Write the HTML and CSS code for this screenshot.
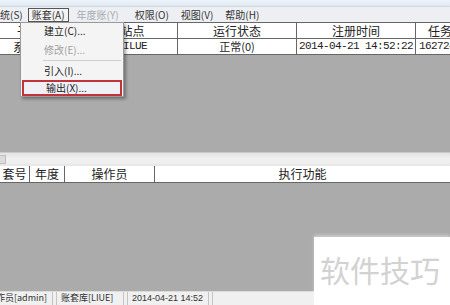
FILE: index.html
```html
<!DOCTYPE html>
<html>
<head>
<meta charset="utf-8">
<link rel="stylesheet" href="styles.css">
</head>
<body>
<div class="app">
  <div class="titlebar"></div>
  <div class="menubar">
    <span class="mi first">系统(S)</span>
    <span class="mi active">账套(A)</span>
    <span class="mi disabled">年度账(Y)</span>
    <span class="mi">权限(O)</span>
    <span class="mi">视图(V)</span>
    <span class="mi">帮助(H)</span>
  </div>
  <div class="grid top-grid">
    <div class="row head">
      <div class="c w1 left hp">子系统</div>
      <div class="c w2">站点</div>
      <div class="c w3">运行状态</div>
      <div class="c w4">注册时间</div>
      <div class="c w5">任务号</div>
    </div>
    <div class="row">
      <div class="c w1 left dp">系统管理</div>
      <div class="c w2 left mono sp">LILUE</div>
      <div class="c w3 mixed">正常(0)</div>
      <div class="c w4 mono">2014-04-21 14:52:22</div>
      <div class="c w5 left mono tp">1627244</div>
    </div>
  </div>
  <div class="gray upper"></div>
  <div class="hscroll"><span class="sbtn"></span></div>
  <div class="grid log-grid">
    <div class="row head">
      <div class="c l1">套号</div>
      <div class="c l2">年度</div>
      <div class="c l3">操作员</div>
      <div class="c l4">执行功能</div>
    </div>
  </div>
  <div class="gray lower"></div>
  <div class="status">
    <span class="pane p1">操作员[admin]</span>
    <span class="pane p2">账套库[LIUE]</span>
    <span class="pane p3">2014-04-21 14:52</span>
    <span class="pane p4"></span>
  </div>

  <div class="dropdown">
    <div class="item">建立(C)...</div>
    <div class="item disabled second">修改(E)...</div>
    <div class="sep"></div>
    <div class="item">引入(I)...</div>
    <div class="item selected">输出(X)...</div>
  </div>

  <div class="watermark">软件技巧</div>
</div>
</body>
</html>
```

FILE: styles.css
```css
* { box-sizing: border-box; }
html, body { margin: 0; padding: 0; }
body {
  width: 450px;
  height: 305px;
  overflow: hidden;
  font-family: "Noto Sans CJK SC", "Liberation Sans", sans-serif;
  color: #222;
}
.app {
  position: relative;
  width: 450px;
  height: 305px;
  display: flex;
  flex-direction: column;
  background: #ababab;
  overflow: hidden;
}
.titlebar {
  height: 7px;
  background: linear-gradient(#eef3f9, #dfe8f2);
  border-bottom: 1px solid #cfd8e3;
}
.menubar {
  height: 15px;
  background: #edeff2;
  display: flex;
  align-items: center;
  font-size: 10px;
  line-height: 12px;
  white-space: nowrap;
}
.mi {
  padding: 0 3px;
  margin-right: 4px;
  color: #333;
  border: 1px solid transparent;
}
.mi.first { margin-left: -14px; margin-right: 1px; }
.mi.active {
  border: 1px solid #555;
  background: #f4f4f4;
}
.mi.disabled { color: #a7abb3; margin-right: 8px; }

.grid { background: #fff; }
.top-grid {
  border-top: 1px solid #666;
}
.row {
  display: flex;
  height: 16px;
  border-bottom: 1px solid #666;
  white-space: nowrap;
}
.c {
  height: 15px;
  border-right: 1px solid #666;
  text-align: center;
  font-size: 12px;
  line-height: 15px;
  overflow: hidden;
  flex: none;
}
.left { text-align: left; }
.hp { padding-left: 17px; }
.dp { padding-left: 13px; }
.sp { padding-left: 29px; }
.tp { padding-left: 3px; }
.mono {
  font-family: "Liberation Mono", monospace;
  font-size: 11px;
  letter-spacing: -0.6px;
}
.mixed { font-size: 11px; }
.w1 { width: 88px; }
.w2 { width: 90px; }
.w3 { width: 119px; }
.w4 { width: 119px; }
.w5 { width: 60px; border-right: none; }

.upper { height: 97px; }
.hscroll {
  height: 14px;
  background: linear-gradient(#e3e3e3, #f0f0f0 40%, #f0f0f0 70%, #e6e6e6);
  border-top: 1px solid #c9c9c9;
  display: flex;
  align-items: center;
}
.sbtn {
  width: 6px;
  height: 9px;
  background: #dcdcdc;
  border: 1px solid #bdbdbd;
  border-left: none;
}
.log-grid .row { height: 17px; }
.log-grid .c { height: 16px; line-height: 16px; }
.l1 { width: 30px; }
.l2 { width: 35px; }
.l3 { width: 90px; }
.l4 { width: 295px; border-right: none; }

.lower { flex: 1; }
.status {
  height: 14px;
  background: #f0f0f0;
  border-top: 1px solid #dcdcdc;
  display: flex;
  gap: 3px;
  font-size: 9px;
  line-height: 12px;
  white-space: nowrap;
  overflow: hidden;
}
.pane {
  height: 13px;
  border-right: 1px solid #c4c4c4;
  border-left: 1px solid #c4c4c4;
  color: #333;
  overflow: hidden;
  flex: none;
}
.p1 { width: 53px; text-indent: -13px; border-left: none; }
.p2 { width: 68px; padding-left: 4px; }
.p3 { width: 82px; padding-left: 4px; font-family: "Liberation Sans", sans-serif; }
.p4 { width: 120px; }

.dropdown {
  position: absolute;
  left: 20px;
  top: 22px;
  width: 104px;
  height: 75px;
  background: #f4f4f4;
  border: 1px solid #9a9a9a;
  box-shadow: 2px 2px 3px rgba(0, 0, 0, 0.35);
  padding-top: 0;
  font-size: 10px;
}
.item {
  height: 16px;
  line-height: 16px;
  padding-left: 23px;
  color: #222;
}
.item.second { margin-top: 3px; }
.item.disabled { color: #a0a0a0; }
.sep {
  height: 1px;
  margin: 2px 2px 2px 22px;
  background: #d0d0d0;
}
.item.selected {
  margin: 1px 1px 0;
  padding-left: 22px;
  height: 16px;
  line-height: 12px;
  border: 2px solid #c0323c;
  background: #eef0f6;
}

.watermark {
  position: absolute;
  left: 314px;
  top: 237px;
  width: 136px;
  height: 68px;
  background: #fff;
  box-shadow: 0 -2px 3px rgba(255, 255, 255, 0.4);
  color: #d2d2d2;
  font-size: 30px;
  line-height: 30px;
  padding: 17px 0 0 6px;
  white-space: nowrap;
}
```
